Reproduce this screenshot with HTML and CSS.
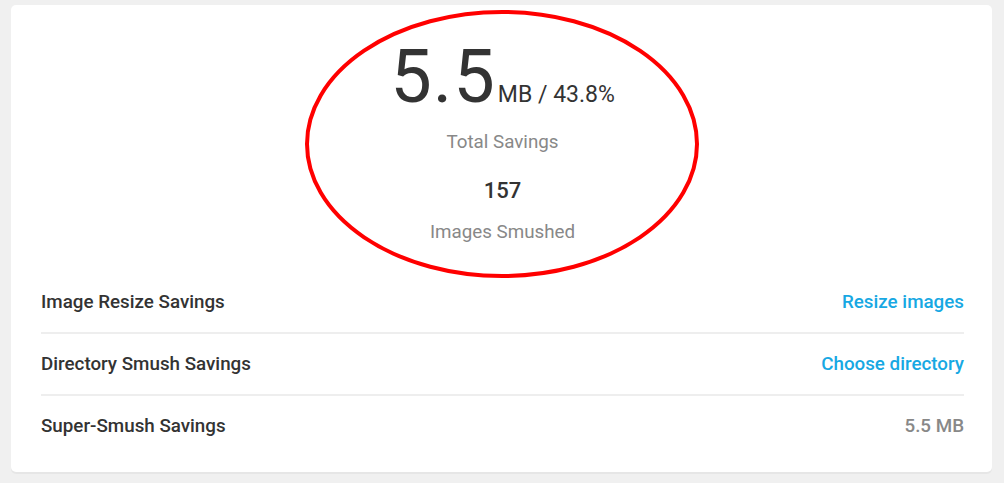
FILE: index.html
```html
<!DOCTYPE html>
<html>
<head>
<meta charset="utf-8">
<link rel="stylesheet" href="styles.css">
</head>
<body>
<div class="card">
  <div class="summary">
    <div class="big">
      <span class="num">5.5</span><span class="unit">MB / 43.8%</span>
    </div>
    <div class="label">Total Savings</div>
    <div class="count">157</div>
    <div class="label">Images Smushed</div>
    <svg class="ring" width="400" height="274" viewBox="0 0 400 274">
      <ellipse cx="200" cy="137" rx="195" ry="132" fill="none" stroke="#ff0000" stroke-width="4"/>
    </svg>
  </div>
  <ul class="rows">
    <li class="row"><span class="name">Image Resize Savings</span><a class="link">Resize images</a></li>
    <li class="row"><span class="name">Directory Smush Savings</span><a class="link">Choose directory</a></li>
    <li class="row"><span class="name">Super-Smush Savings</span><span class="value">5.5 MB</span></li>
  </ul>
</div>
</body>
</html>
```
FILE: styles.css
```css
html, body {
  margin: 0;
  padding: 0;
  background: #f0f0f0;
}
body {
  padding: 5px 11px;
  font-family: Roboto, "Liberation Sans", sans-serif;
  color: #333;
}
.card {
  width: 981px;
  height: 467px;
  box-sizing: border-box;
  background: #fff;
  border-radius: 5px;
  box-shadow: 0 2px 0 #e6e6e6;
  padding: 0 28px 0 30px;
  display: flex;
  flex-direction: column;
}
.summary {
  position: relative;
  display: flex;
  flex-direction: column;
  align-items: center;
  height: 267px;
  padding-top: 35px;
  box-sizing: border-box;
}
.big {
  display: flex;
  align-items: baseline;
  line-height: 1;
}
.num {
  font-size: 74px;
  letter-spacing: 1px;
  color: #333;
}
.unit {
  font-size: 23px;
  margin-left: 2px;
  color: #333;
}
.label {
  font-size: 18.8px;
  color: #888;
  line-height: 24px;
}
.big + .label {
  margin-top: 16px;
}
.count {
  font-size: 22px;
  font-weight: 500;
  margin-top: 23px;
  line-height: 28px;
  margin-bottom: 15px;
}
.ring {
  position: absolute;
  left: 50%;
  top: 2px;
  margin-left: -201px;
}
.rows {
  list-style: none;
  margin: 0;
  padding: 0;
}
.row {
  display: flex;
  justify-content: space-between;
  align-items: center;
  height: 60px;
  border-bottom: 2px solid #eee;
  font-size: 18.8px;
  font-weight: 500;
}
.row:last-child {
  border-bottom: none;
}
.link {
  color: #17a8e3;
  cursor: pointer;
}
.value {
  color: #888;
}
```
